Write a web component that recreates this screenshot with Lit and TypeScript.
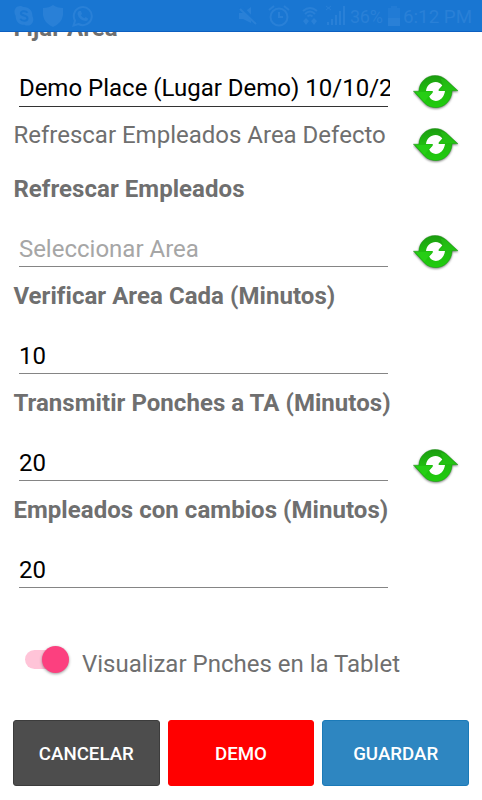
import { LitElement, html, css, nothing } from "lit";
import { customElement, property } from "lit/decorators.js";

@customElement("refresh-icon")
class RefreshIcon extends LitElement {
  static styles = css`
    :host { display: block; width: 48px; height: 38px; }
    svg { display: block; }
    .shade { filter: drop-shadow(0.8px 1px 0.8px rgba(0, 0, 0, 0.5)); }
  `;
  render() {
    return html`<svg width="48" height="38" viewBox="0 0 48 38">
      <defs>
        <linearGradient id="g" x1="0" y1="0" x2="0" y2="1">
          <stop offset="0" stop-color="#1c9c10" />
          <stop offset="0.5" stop-color="#20bd10" />
          <stop offset="1" stop-color="#20cc0e" />
        </linearGradient>
      </defs>
      <path class="shade" fill="url(#g)" stroke="#128a0c" stroke-width="0.4" stroke-linejoin="round"
        d="M.4 16.2H5.8C6.2 7 13.4.5 22 .5C26.2.5 30 1.9 33.2 4.8L45 15.8H39.2C38.8 26 31 32.7 23 32.7C18.4 32.7 14.5 31.2 11.6 28.3Z" />
      <path fill="#fff"
        d="M13 15.9C13.6 10.4 17.6 6.9 22.6 6.9C25.4 6.9 27.8 8.1 29.3 10.4L24.2 16H32C31.2 21.9 27.4 25.9 22.8 25.9C20 25.9 17.6 24.6 16.2 21.6L20.8 16.4V15.9Z" />
      <path d="M20.4 14.5L26 14.5L25 17.6H19.5Z" fill="#fff" />
      <path d="M27.3 3.2L33 5.1L43.4 15.2H26L30.4 10.4Z" fill="#28cc16" opacity=".5" />
      <path d="M2.4 16.9L19 16.9L15.4 21.4L11.6 26.8Z" fill="#2cd81a" opacity=".55" />
    </svg>`;
  }
}

@customElement("status-bar")
class StatusBar extends LitElement {
  static styles = css`
    :host {
      display: flex; box-sizing: border-box; height: 32px; padding: 0 11px 0 14px;
      align-items: center; background: #1976d2; border-bottom: 1px solid #0d5fc0;
      color: #2980d7; font: 18.5px/32px Roboto, sans-serif; white-space: nowrap;
    }
    svg { display: block; fill: none; stroke: currentColor; stroke-width: 2; flex: none; }
    .solid { fill: currentColor; stroke: none; }
    .left { display: flex; gap: 8px; flex: 1; }
    .mute { margin-right: 11px; }
    .alarm { margin-right: 12px; }
    .wifi { margin-right: 8px; }
    .signal { margin-right: 5px; }
    .level { font-size: 18px; width: 33px; letter-spacing: -0.3px; padding-top: 2px; }
    .battery { margin: 0 3px 0 5px; }
    .clock { font-size: 18.8px; width: 68px; padding-top: 2px; }
  `;
  render() {
    return html`
      <div class="left">
        <svg width="20" height="22" viewBox="0 0 20 22">
          <path class="solid" d="M6 1C7.6 1 8.6 1.5 9.4 2C15 1.7 18.6 5.5 18.4 11C20.5 14.5 19 20 14 20.6C12.5 20.7 11.5 20.3 10.5 19.7C5 19.9 1.5 16.2 1.7 11C-1 7 1 1 6 1Z" />
          <path d="M13.5 7.8C12 5.4 6.8 5.6 6.9 8.4C7 11 13.4 10 13.5 13.2C13.6 16.5 8 16.5 6.2 13.8" stroke="#1976d2" />
        </svg>
        <svg width="22" height="22" viewBox="0 0 22 22">
          <path class="solid" d="M11 0Q15 3 21 3V10Q20 18 11 22Q2 18 1 10V3Q7 3 11 0Z" />
        </svg>
        <svg width="21" height="22" viewBox="0 0 21 22">
          <path d="M1.5 20.5L3 15.6A9 9 0 1 1 6.5 19Z" />
          <path class="solid" d="M7 6L9 6L10 9L8.8 10.3Q10 12.5 12.3 13.2L13.7 12L16 13.5Q16 16 13.5 16Q7 15 5.5 9Q5.5 7 7 6Z" />
        </svg>
      </div>
      <svg class="mute" width="18" height="20" viewBox="0 0 18 20">
        <path class="solid" d="M0 7H4L12 1V17L4 13H0Z" /><path d="M2 1L17 17" stroke="#1976d2" stroke-width="4" /><path d="M1 3L17 18" />
      </svg>
      <svg class="alarm" width="22" height="22" viewBox="0 0 22 22">
        <circle cx="11" cy="12" r="8.5" /><path d="M11 7V12H15M1 5L6 1M21 5L16 1" />
      </svg>
      <svg class="wifi" width="16" height="20" viewBox="0 0 16 20">
        <path d="M1 5Q8-1 15 5M3 8Q8 3 13 8M5.5 10.5Q8 8 10.5 10.5" />
        <path class="solid" d="M1 15L4 12L7 15L4 19ZM9 15L12 12L15 15L12 19Z" />
      </svg>
      <svg class="signal" width="19" height="21" viewBox="0 0 19 21">
        <path d="M0 1L5 5M5 1L0 5" stroke-width="1" />
        <path d="M2 17V20M6 14V20M10 10V20M14 6V20M18 1V20" />
      </svg>
      <span class="level">36%</span>
      <svg class="battery" width="12" height="20" viewBox="0 0 12 20">
        <path class="solid" d="M3 0H9V2H12V20H0V2H3Z" opacity=".5" /><path class="solid" d="M0 12H12V20H0Z" />
      </svg>
      <span class="clock">6:12 PM</span>
    `;
  }
}

@customElement("form-row")
class FormRow extends LitElement {
  @property() kind = "label";
  @property() text = "";
  @property({ type: Boolean }) refresh = false;
  static styles = css`
    :host { display: flex; height: 53.5px; justify-content: space-between; align-items: flex-start; }
    .label, .plain { padding-top: 1px; color: #6f6f6f; white-space: nowrap; line-height: 28px; }
    .label { font-weight: 700; letter-spacing: 0.05px; }
    .field {
      box-sizing: border-box; width: 369.5px; height: 40px; margin-left: 5.5px; padding-top: 8px;
      color: #000; border-bottom: 1.5px solid #858585; line-height: 28px;
    }
    .value { width: 371px; overflow: hidden; white-space: nowrap; }
    .strong { border-color: #333; }
    .strong .value { margin-top: -0.6px; }
    .hint { color: #a6a6a6; }
    refresh-icon { flex: none; margin-top: 8px; }
    .area { display: flex; width: 376px; }
  `;
  render() {
    const isLabel = this.kind === "label" || this.kind === "plain";
    return html`
      <div class="area ${isLabel ? this.kind : ""}">
        ${isLabel
          ? html`<span>${this.text}</span>`
          : html`<div class="field ${this.kind}"><div class="value">${this.text}</div></div>`}
      </div>
      ${this.refresh ? html`<refresh-icon></refresh-icon>` : nothing}
    `;
  }
}

const ROWS = [
  { kind: "label", text: "Fijar Area" },
  { kind: "strong", text: "Demo Place (Lugar Demo) 10/10/2", refresh: true },
  { kind: "plain", text: "Refrescar Empleados Area Defecto", refresh: true },
  { kind: "label", text: "Refrescar Empleados" },
  { kind: "hint", text: "Seleccionar Area", refresh: true },
  { kind: "label", text: "Verificar Area Cada (Minutos)" },
  { kind: "number", text: "10" },
  { kind: "label", text: "Transmitir Ponches a TA (Minutos)" },
  { kind: "number", text: "20", refresh: true },
  { kind: "label", text: "Empleados con cambios (Minutos)" },
  { kind: "number", text: "20" },
];

@customElement("app-root")
class AppRoot extends LitElement {
  static styles = css`
    :host {
      display: flex; flex-direction: column; position: relative; height: 800px; width: 482px;
      overflow: hidden; background: #fff; font: 24px/28px Roboto, sans-serif;
    }
    status-bar { position: absolute; top: 0; left: 0; right: 0; z-index: 1; }
    .rows { padding: 13px 21px 0 13.4px; }
    .toggle { display: flex; align-items: center; height: 32px; margin: 42px 0 0 25px; color: #6f6f6f; }
    .track { display: flex; justify-content: flex-end; align-items: center; width: 44px; height: 19px; border-radius: 10px; background: linear-gradient(90deg, #ffc4d8 36px, transparent 36px); margin-right: 13px; }
    .thumb { width: 27px; height: 27px; border-radius: 50%; background: #fc407f; box-shadow: 0 1px 3px rgba(0, 0, 0, 0.4); }
    .caption { padding-top: 8px; }
    .actions { display: grid; grid-template-columns: repeat(3, 1fr); gap: 8px; margin: 44px 13px 0; height: 66.5px; }
    button { border: 1px solid; border-radius: 3px; padding: 2px 0 0; color: #fff; font: 500 18.7px Roboto, sans-serif; }
    .cancel { background: #4d4d4d; border-color: #3c3c3c; }
    .demo { background: #f00; border-color: #f00; }
    .save { background: #2e86c1; border-color: #1b7ab8; }
  `;
  render() {
    return html`
      <status-bar></status-bar>
      <div class="rows">
        ${ROWS.map((r) => html`<form-row .kind=${r.kind} .text=${r.text} .refresh=${!!r.refresh}></form-row>`)}
      </div>
      <div class="toggle">
        <div class="track"><div class="thumb"></div></div>
        <span class="caption">Visualizar Pnches en la Tablet</span>
      </div>
      <div class="actions">
        <button class="cancel">CANCELAR</button>
        <button class="demo">DEMO</button>
        <button class="save">GUARDAR</button>
      </div>
    `;
  }
}
